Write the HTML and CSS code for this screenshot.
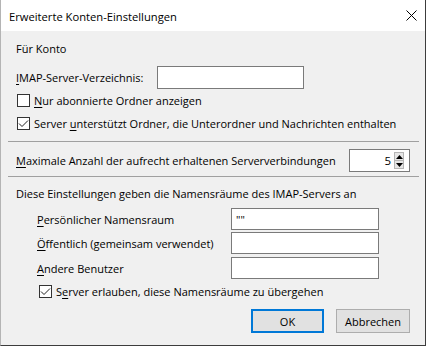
FILE: index.html
```html
<!DOCTYPE html>
<html lang="de">
<head>
<meta charset="utf-8">
<title>Erweiterte Konten-Einstellungen</title>
<link rel="stylesheet" href="styles.css">
</head>
<body>
<div class="window">
  <div class="titlebar">
    <span class="title">Erweiterte Konten-Einstellungen</span>
    <svg class="close" width="11" height="11" viewBox="0 0 11 11"><path d="M0.5 0.5 L10.5 10.5 M10.5 0.5 L0.5 10.5" stroke="#000" stroke-width="1" fill="none"/></svg>
  </div>
  <div class="content">
    <div class="row r-konto">Für Konto</div>
    <div class="row r-imap">
      <span class="lbl-imap"><u>I</u>MAP-Server-Verzeichnis:</span>
      <span class="input in-imap"></span>
    </div>
    <div class="row r-cb1">
      <span class="cb"></span>
      <span class="cb-text"><u>N</u>ur abonnierte Ordner anzeigen</span>
    </div>
    <div class="row r-cb2">
      <span class="cb"><svg width="11" height="11" viewBox="0 0 11 11"><path d="M1 5.5 L4 8.5 L10 2.5" stroke="#222" stroke-width="1" fill="none"/></svg></span>
      <span class="cb-text">Server <u>u</u>nterstützt Ordner, die Unterordner und Nachrichten enthalten</span>
    </div>
    <div class="sep sep1"></div>
    <div class="row r-max">
      <span class="lbl-max"><u>M</u>aximale Anzahl der aufrecht erhaltenen Serververbindungen</span>
      <span class="spinner">
        <span class="spin-val">5</span>
        <span class="spin-btns">
          <span class="spin-btn"><svg width="7" height="4" viewBox="0 0 7 4"><path d="M0 4 L3.5 0 L7 4 Z" fill="#000"/></svg></span>
          <span class="spin-btn"><svg width="7" height="4" viewBox="0 0 7 4"><path d="M0 0 L3.5 4 L7 0 Z" fill="#000"/></svg></span>
        </span>
      </span>
    </div>
    <div class="sep sep2"></div>
    <div class="row r-diese">Diese Einstellungen geben die Namensräume des IMAP-Servers an</div>
    <div class="row ns r-pers">
      <span class="lbl-ns"><u>P</u>ersönlicher Namensraum</span>
      <span class="input in-ns">""</span>
    </div>
    <div class="row ns r-oeff">
      <span class="lbl-ns"><u>Ö</u>ffentlich (gemeinsam verwendet)</span>
      <span class="input in-ns"></span>
    </div>
    <div class="row ns r-andere">
      <span class="lbl-ns"><u>A</u>ndere Benutzer</span>
      <span class="input in-ns"></span>
    </div>
    <div class="row r-cb3">
      <span class="cb"><svg width="11" height="11" viewBox="0 0 11 11"><path d="M1 5.5 L4 8.5 L10 2.5" stroke="#222" stroke-width="1" fill="none"/></svg></span>
      <span class="cb-text">S<u>e</u>rver erlauben, diese Namensräume zu übergehen</span>
    </div>
    <div class="buttons">
      <span class="btn btn-ok">OK</span>
      <span class="btn btn-cancel">Abbrechen</span>
    </div>
  </div>
</div>
</body>
</html>
```
FILE: styles.css
```css
html, body {
  margin: 0;
  padding: 0;
  background: #ffffff;
}

.window {
  width: 426px;
  height: 346px;
  box-sizing: border-box;
  border-left: 1px solid #b4b4b4;
  border-right: 1px solid #3c3c3c;
  border-bottom: 1px solid #3c3c3c;
  background: #f0f0f0;
  font-family: "Open Sans", "Noto Sans", sans-serif;
  font-size: 11px;
  color: #000;
  overflow: hidden;
}

u {
  text-decoration: underline;
  text-underline-offset: 2px;
  text-decoration-thickness: 1px;
}

.titlebar {
  height: 31px;
  background: #ffffff;
  display: flex;
  align-items: center;
  padding-left: 8px;
  padding-right: 8px;
}

.title {
  flex: 1;
  font-size: 11.2px;
  margin-top: 1px;
}

.close {
  display: block;
  margin-top: 0px;
}

.content {
  padding: 7px 15px 0 15px;
}

.row {
  display: flex;
  align-items: center;
  white-space: nowrap;
}

.r-konto { height: 20px; }
.r-imap { height: 23px; margin-top: 8px; }
.r-cb1 { height: 20px; margin-top: 1px; }
.r-cb2 { height: 20px; margin-top: 3px; }
.sep1 { margin-top: 8px; }
.r-max { height: 23px; margin-top: 7px; }
.sep2 { margin-top: 4px; }
.r-diese { height: 20px; margin-top: 6px; }
.r-pers { height: 22px; margin-top: 5px; }
.r-oeff { height: 22px; margin-top: 2px; }
.r-andere { height: 22px; margin-top: 3px; }
.r-cb3 { height: 20px; margin-top: 2px; padding-left: 23px; }

.sep {
  height: 1px;
  background: #a0a0a0;
  margin-left: -8px;
  margin-right: -9px;
}

.input {
  display: flex;
  align-items: center;
  box-sizing: border-box;
  background: #fff;
  border: 1px solid #7a7a7a;
  padding-left: 4px;
}

.lbl-imap { width: 141px; }
.in-imap { width: 147px; height: 23px; }

.cb {
  width: 13px;
  height: 13px;
  box-sizing: border-box;
  border: 1px solid #333;
  background: #fff;
  margin-left: 1px;
  display: flex;
  align-items: center;
  justify-content: center;
  flex: none;
}

.r-cb3 .cb { margin-left: 0; }

.cb svg { display: block; }

.cb-text { margin-left: 4px; }

.lbl-max { width: 333px; }

.spinner {
  width: 61px;
  height: 23px;
  box-sizing: border-box;
  background: #fff;
  border: 1px solid #7a7a7a;
  display: flex;
  align-items: center;
  justify-content: flex-end;
  padding-right: 5px;
}

.spin-val {
  margin-right: 3px;
  font-size: 11.5px;
}

.spin-btns {
  display: flex;
  flex-direction: column;
  width: 10px;
  height: 17px;
  box-sizing: border-box;
  border: 1px solid #b5b5b5;
  background: #e6e6e6;
}

.spin-btn {
  flex: 1;
  display: flex;
  align-items: center;
  justify-content: center;
}

.spin-btn + .spin-btn {
  border-top: 1px solid #b5b5b5;
}

.spin-btn svg { display: block; }

.ns { padding-left: 21px; }

.lbl-ns { width: 194px; }
.in-ns { width: 148px; height: 22px; }

.buttons {
  display: flex;
  justify-content: flex-end;
  gap: 12px;
  margin-top: 8px;
}

.btn {
  height: 24px;
  box-sizing: border-box;
  background: #e1e1e1;
  border: 1px solid #adadad;
  display: flex;
  align-items: center;
  justify-content: center;
}

.btn-ok {
  width: 73px;
  border: 2px solid #0078d7;
}

.btn-cancel {
  width: 74px;
}
```
